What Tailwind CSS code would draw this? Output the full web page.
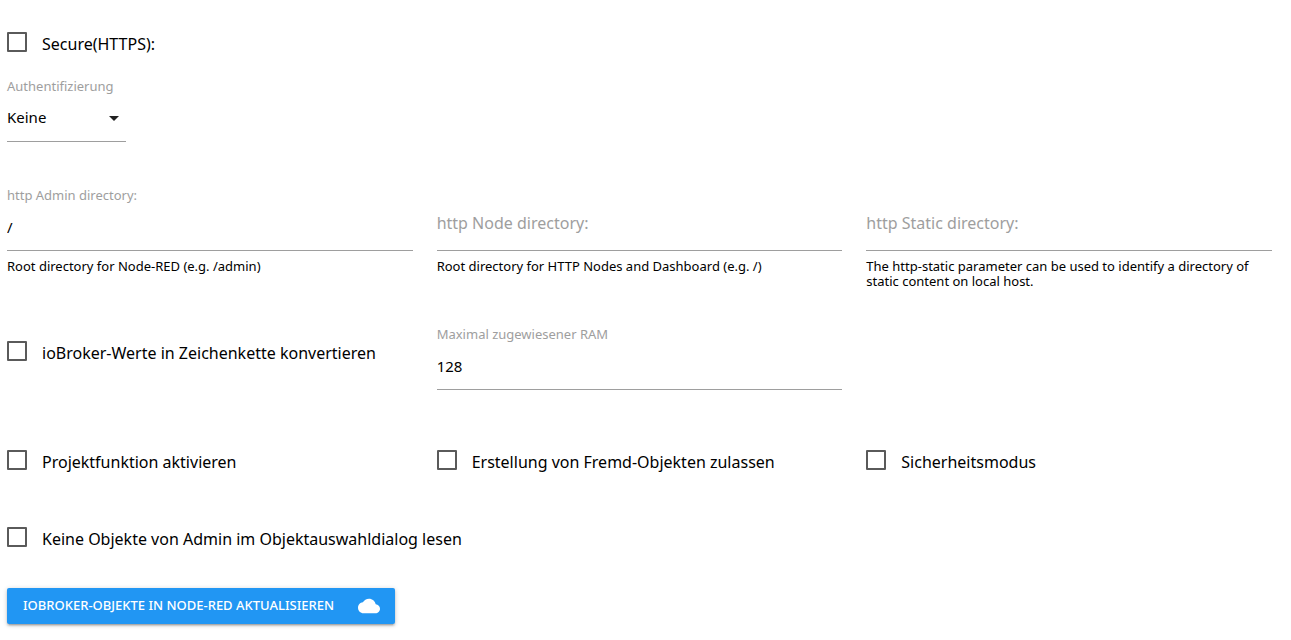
<!DOCTYPE html>
<html lang="de">
<head>
<meta charset="utf-8">
<meta name="viewport" content="width=device-width, initial-scale=1">
<title>Node-RED</title>
<script src="https://cdn.jsdelivr.net/npm/@tailwindcss/browser@4"></script>
</head>
<body class="bg-white font-['Noto_Sans',sans-serif] text-black">
<form class="flex flex-col items-stretch pt-8 pr-[19px] pb-4 pl-[7px]">
  <label class="flex h-6 items-start gap-[15px] text-base leading-6">
    <input type="checkbox" class="size-5 shrink-0 appearance-none rounded-[1px] border-2 border-[#5a5a5a] checked:bg-[#2196f3]">
    <span>Secure(HTTPS):</span>
  </label>

  <div class="mt-[22px] flex h-16 w-[119px] flex-col border-b border-[#9e9e9e]">
    <label for="auth" class="text-[13px] leading-4 text-[#9e9e9e]">Authentifizierung</label>
    <div class="relative mt-2">
      <select id="auth" class="h-8 w-full appearance-none bg-transparent pb-0.5 text-[15px] outline-none">
        <option>Keine</option>
      </select>
      <svg class="pointer-events-none absolute top-1 right-0 size-6" viewBox="0 0 24 24" fill="#212121" aria-hidden="true"><path d="M7 10l5 5 5-5z"/></svg>
    </div>
  </div>

  <div class="mt-[45px] grid grid-cols-3 gap-x-6">
    <div>
      <label for="admin" class="block text-[13px] leading-4 text-[#9e9e9e]">http Admin directory:</label>
      <input id="admin" type="text" value="/" class="block h-12 w-full border-b border-[#9e9e9e] text-[15px] outline-none">
      <p class="mt-2 text-[13px] leading-[15px]">Root directory for Node-RED (e.g. /admin)</p>
    </div>
    <div>
      <input type="text" aria-label="http Node directory" placeholder="http Node directory:" class="mt-4 block h-12 w-full border-b border-[#9e9e9e] pb-2 text-base outline-none placeholder:text-[#9e9e9e]">
      <p class="mt-2 text-[13px] leading-[15px]">Root directory for HTTP Nodes and Dashboard (e.g. /)</p>
    </div>
    <div>
      <input type="text" aria-label="http Static directory" placeholder="http Static directory:" class="mt-4 block h-12 w-full border-b border-[#9e9e9e] pb-2 text-base outline-none placeholder:text-[#9e9e9e]">
      <p class="mt-2 text-[13px] leading-[15px]">The http-static parameter can be used to identify a directory of static content on local host.</p>
    </div>
  </div>

  <div class="mt-[37px] grid grid-cols-3 gap-x-6">
    <label class="mt-[15px] flex h-6 items-start gap-[15px] text-base leading-6">
      <input type="checkbox" class="size-5 shrink-0 appearance-none rounded-[1px] border-2 border-[#5a5a5a] checked:bg-[#2196f3]">
      <span>ioBroker-Werte in Zeichenkette konvertieren</span>
    </label>
    <div>
      <label for="ram" class="block text-[13px] leading-4 text-[#9e9e9e]">Maximal zugewiesener RAM</label>
      <input id="ram" type="text" inputmode="numeric" value="128" class="block h-12 w-full border-b border-[#9e9e9e] text-[15px] outline-none">
    </div>
  </div>

  <div class="mt-[60px] grid grid-cols-3 gap-x-6 text-base leading-6">
    <label class="flex h-6 items-start gap-[15px]">
      <input type="checkbox" class="size-5 shrink-0 appearance-none rounded-[1px] border-2 border-[#5a5a5a] checked:bg-[#2196f3]">
      <span>Projektfunktion aktivieren</span>
    </label>
    <label class="flex h-6 items-start gap-[15px]">
      <input type="checkbox" class="size-5 shrink-0 appearance-none rounded-[1px] border-2 border-[#5a5a5a] checked:bg-[#2196f3]">
      <span>Erstellung von Fremd-Objekten zulassen</span>
    </label>
    <label class="flex h-6 items-start gap-[15px]">
      <input type="checkbox" class="size-5 shrink-0 appearance-none rounded-[1px] border-2 border-[#5a5a5a] checked:bg-[#2196f3]">
      <span>Sicherheitsmodus</span>
    </label>
  </div>

  <label class="mt-[53px] flex h-6 items-start gap-[15px] text-base leading-6">
    <input type="checkbox" class="size-5 shrink-0 appearance-none rounded-[1px] border-2 border-[#5a5a5a] checked:bg-[#2196f3]">
    <span>Keine Objekte von Admin im Objektauswahldialog lesen</span>
  </label>

  <button type="button" class="mt-[37px] flex h-9 min-w-[388px] items-center justify-between gap-[15px] self-start rounded-[2px] bg-[#2196f3] pr-[15px] pl-4 text-[13px] font-medium whitespace-nowrap text-white uppercase shadow-[0_2px_2px_0_rgba(0,0,0,0.14),0_3px_1px_-2px_rgba(0,0,0,0.12),0_1px_5px_0_rgba(0,0,0,0.2)]">
    ioBroker-Objekte in Node-RED aktualisieren
    <svg class="size-[22px]" viewBox="0 0 24 24" fill="currentColor" aria-hidden="true"><path d="M19.35 10.04C18.67 6.59 15.64 4 12 4 9.11 4 6.6 5.64 5.35 8.04 2.34 8.36 0 10.91 0 14c0 3.31 2.69 6 6 6h13c2.76 0 5-2.24 5-5 0-2.64-2.05-4.78-4.65-4.96z"/></svg>
  </button>
</form>
</body>
</html>
